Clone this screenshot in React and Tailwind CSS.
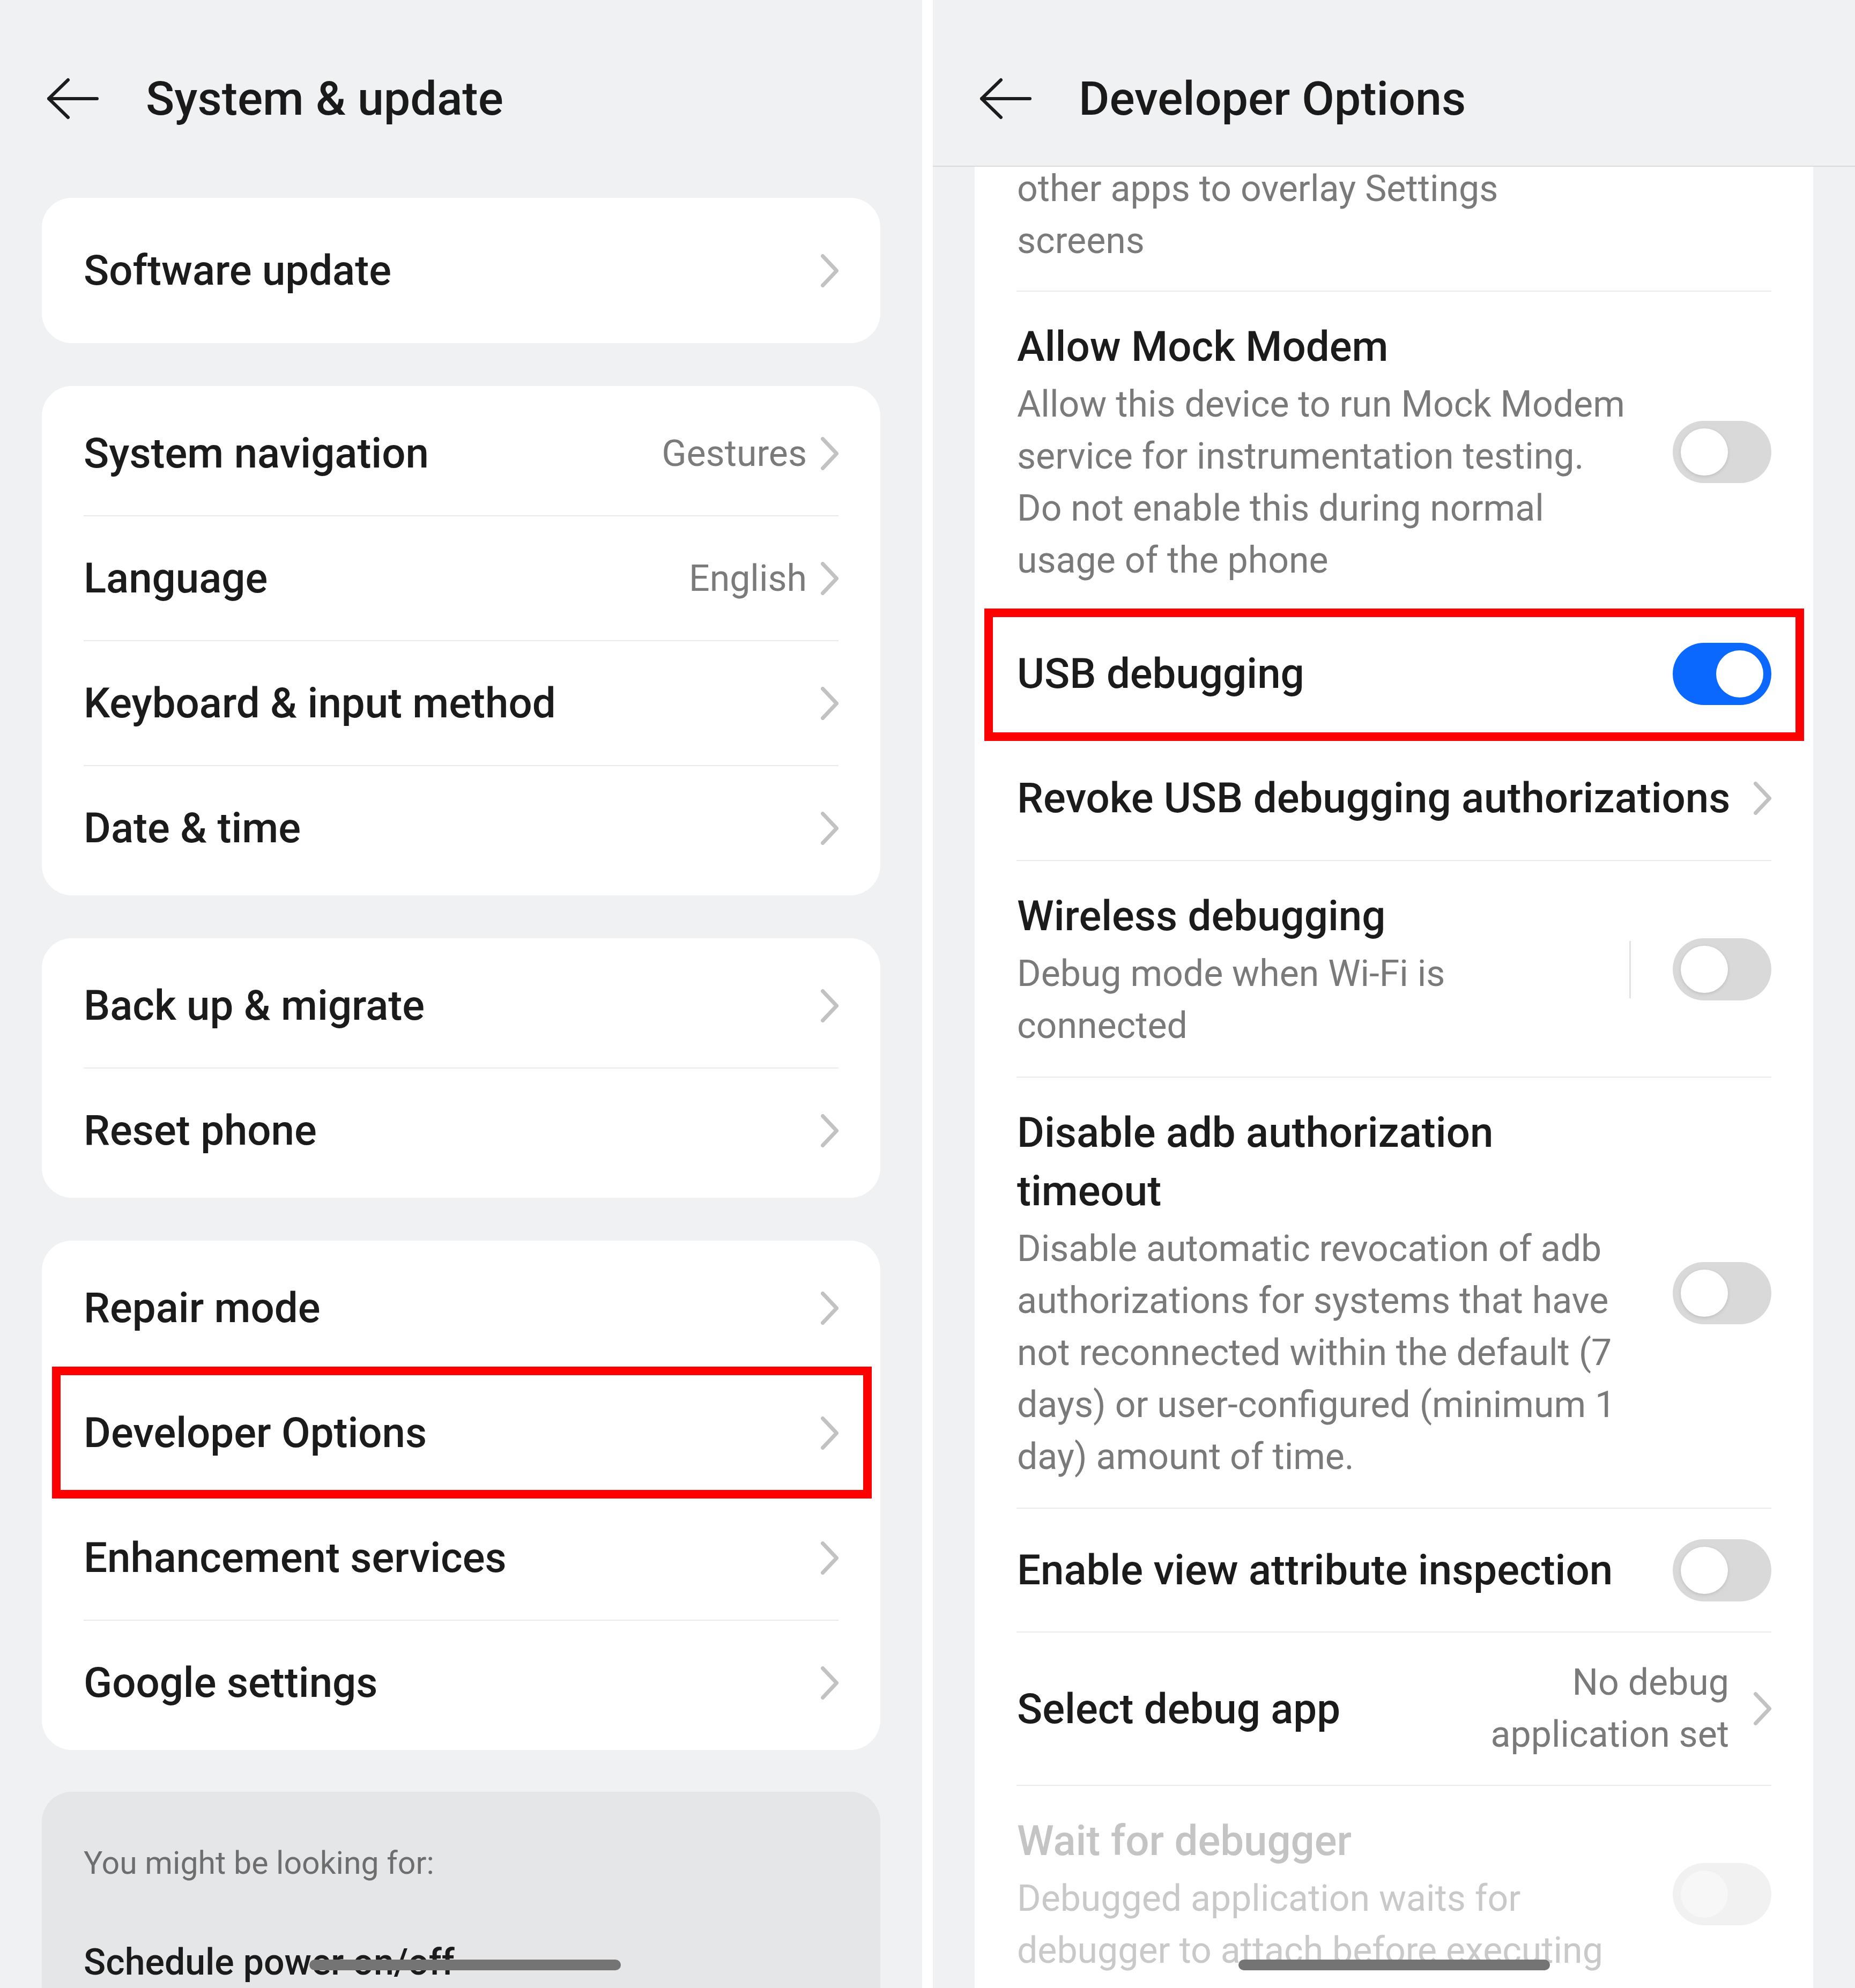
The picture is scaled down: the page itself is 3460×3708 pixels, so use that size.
const LEFT_CARDS = [
  [{ title: 'Software update' }],
  [
    { title: 'System navigation', value: 'Gestures' },
    { title: 'Language', value: 'English' },
    { title: 'Keyboard & input method' },
    { title: 'Date & time' },
  ],
  [{ title: 'Back up & migrate' }, { title: 'Reset phone' }],
  [
    { title: 'Repair mode' },
    { title: 'Developer Options', marked: true },
    { title: 'Enhancement services' },
    { title: 'Google settings' },
  ],
]

function BackArrow() {
  return (
    <svg width="100" height="80" viewBox="0 0 100 80" fill="none" stroke="#1c1c1c" strokeWidth="6" strokeLinecap="round" strokeLinejoin="round">
      <path d="M6 40 H96" />
      <path d="M42 5 L6 40 L42 75" />
    </svg>
  )
}

function Chevron() {
  return (
    <svg width="33" height="62" viewBox="0 0 33 62" fill="none" stroke="#c2c2c2" strokeWidth="7" strokeLinecap="round" strokeLinejoin="round" className="shrink-0">
      <path d="M3.5 3.5 L29.5 31 L3.5 58.5" />
    </svg>
  )
}

function Toggle({ on, disabled }) {
  const track = on ? 'bg-[#0a68ff] justify-end' : disabled ? 'bg-[#f1f1f1] justify-start' : 'bg-[#d9d9d9] justify-start'
  const knob = disabled ? 'bg-[#f7f7f7]' : on ? 'bg-white' : 'bg-white shadow-[0_2px_6px_rgba(0,0,0,0.13)]'
  return (
    <div className={`flex items-center w-[184px] h-[116px] px-[15px] rounded-full shrink-0 ${track}`}>
      <div className={`w-[88px] h-[88px] rounded-full ${knob}`} />
    </div>
  )
}

// top bar: status area is cropped, title row sits 124px down
function Header({ title }) {
  return (
    <div className="h-[309px] pt-[124px]">
      <div className="flex items-center h-[120px] pl-[85px]">
        <BackArrow />
        <span className="ml-[87px] text-[88px] font-medium text-[#1a1a1a] leading-none">{title}</span>
      </div>
    </div>
  )
}

function Divider() {
  return <div className="mx-[78px] h-[2px] bg-[#ebebeb]" />
}

function Marker({ className }) {
  return <div className={`absolute z-10 border-[16px] border-[#ff0000] pointer-events-none ${className}`} />
}

function LeftPanel() {
  return (
    <div className="relative w-[1720px] h-full bg-[#f0f1f3] overflow-hidden">
      <Header title="System & update" />
      <div className="px-[78px] pt-[60px] flex flex-col gap-[80px]">
        {LEFT_CARDS.map((card, ci) => (
          <div key={ci} className={`bg-white rounded-[56px] ${ci === 0 ? '' : 'py-[10px]'}`}>
            {card.map((row, ri) => (
              <div key={row.title}>
                <div className={`relative flex items-center justify-between px-[78px] ${ci === 0 ? 'h-[271px]' : 'h-[231px]'}`}>
                  <span className="text-[78px] font-medium text-[#1b1b1b] whitespace-nowrap">{row.title}</span>
                  <div className="flex items-center gap-[26px]">
                    {row.value && <span className="text-[68px] text-[#7b7b7b]">{row.value}</span>}
                    <Chevron />
                  </div>
                  {row.marked && <Marker className="-top-[8px] -bottom-[7px] left-[19px] right-[16px]" />}
                </div>
                {ri < card.length - 1 && <Divider />}
              </div>
            ))}
          </div>
        ))}
        <div className="bg-[#e5e6e8] rounded-t-[56px] h-[400px] px-[78px] pt-[88px] -mt-[2px]">
          <div className="text-[59px] leading-[90px] text-[#6e6e6e]">You might be looking for:</div>
          <div className="mt-[86px] text-[68px] leading-[109px] font-medium text-[#1b1b1b]">Schedule power on/off</div>
        </div>
      </div>
      <div className="absolute bottom-[33px] left-[577px] w-[581px] h-[20px] rounded-full bg-[#747474]" />
    </div>
  )
}

const TITLE = 'text-[78px] leading-[109px] font-medium whitespace-nowrap'
const DESC = 'text-[68px] leading-[97px] whitespace-nowrap'

function Lines({ lines, className }) {
  return (
    <div className={className}>
      {lines.map((l) => (
        <div key={l}>{l}</div>
      ))}
    </div>
  )
}

function SwitchItem({ title, desc, disabled, separator }) {
  return (
    <div className="flex items-center pl-[79px] pr-[78px] pt-[48px] pb-[46px]">
      <div className="flex-1">
        <Lines lines={title} className={`${TITLE} ${disabled ? 'text-[#c4c4c4]' : 'text-[#1b1b1b]'}`} />
        <Lines lines={desc} className={`mt-[5px] ${DESC} ${disabled ? 'text-[#c9c9c9]' : 'text-[#7a7a7a]'}`} />
      </div>
      {separator && <div className="w-[3px] h-[107px] bg-[#e3e3e3] mr-[78px]" />}
      <Toggle disabled={disabled} />
    </div>
  )
}

function RightPanel() {
  return (
    <div className="relative w-[1720px] h-full bg-[#f0f1f3] overflow-hidden flex flex-col">
      <div className="border-b-2 border-[#dadada]">
        <Header title="Developer Options" />
      </div>
      <div className="mx-[78px] flex-1 bg-white overflow-hidden">
        <Lines
          lines={['other apps to overlay Settings', 'screens']}
          className={`-mt-[7px] pl-[79px] pb-[44px] ${DESC} text-[#7a7a7a]`}
        />
        <Divider />
        <SwitchItem
          title={['Allow Mock Modem']}
          desc={[
            'Allow this device to run Mock Modem',
            'service for instrumentation testing.',
            'Do not enable this during normal',
            'usage of the phone',
          ]}
        />
        <Divider />
        <div className="relative flex items-center justify-between h-[229px] pl-[79px] pr-[78px]">
          <span className={`${TITLE} text-[#1b1b1b]`}>USB debugging</span>
          <Toggle on />
          <Marker className="-top-[7px] -bottom-[11px] left-[18px] right-[17px]" />
        </div>
        <Divider />
        <div className="flex items-center justify-between h-[231px] pl-[79px] pr-[78px]">
          <span className={`${TITLE} text-[#1b1b1b]`}>Revoke USB debugging authorizations</span>
          <Chevron />
        </div>
        <Divider />
        <SwitchItem title={['Wireless debugging']} desc={['Debug mode when Wi-Fi is', 'connected']} separator />
        <Divider />
        <SwitchItem
          title={['Disable adb authorization', 'timeout']}
          desc={[
            'Disable automatic revocation of adb',
            'authorizations for systems that have',
            'not reconnected within the default (7',
            'days) or user-configured (minimum 1',
            'day) amount of time.',
          ]}
        />
        <Divider />
        <div className="flex items-center justify-between h-[229px] pl-[79px] pr-[78px]">
          <span className={`${TITLE} text-[#1b1b1b]`}>Enable view attribute inspection</span>
          <Toggle />
        </div>
        <Divider />
        <div className="flex items-center justify-between pl-[79px] pr-[78px] py-[45px]">
          <span className={`${TITLE} text-[#1b1b1b]`}>Select debug app</span>
          <div className="flex items-center gap-[46px]">
            <Lines lines={['No debug', 'application set']} className={`${DESC} text-[#7a7a7a] text-right`} />
            <Chevron />
          </div>
        </div>
        <Divider />
        <SwitchItem
          title={['Wait for debugger']}
          desc={['Debugged application waits for', 'debugger to attach before executing']}
          disabled
        />
      </div>
      <div className="absolute bottom-[33px] left-[570px] w-[581px] h-[20px] rounded-full bg-[#747474]" />
    </div>
  )
}

export default function App() {
  return (
    <div className="w-[3460px] h-[3708px] bg-white flex gap-[20px] overflow-hidden font-['Roboto',sans-serif]">
      <LeftPanel />
      <RightPanel />
    </div>
  )
}
